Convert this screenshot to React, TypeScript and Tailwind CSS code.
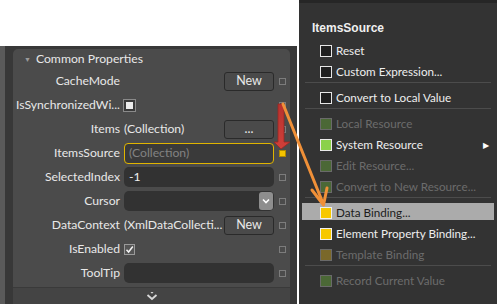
import React from "react";

const FONT = { fontFamily: "Lato, 'Open Sans', sans-serif" };

function Marker({ yellow = false }: { yellow?: boolean }) {
  return yellow ? (
    <div className="w-[7px] h-[7px] bg-[#f5c400] border border-[#b08a00] shrink-0" />
  ) : (
    <div className="w-[7px] h-[7px] border border-[#7c7c7c] shrink-0" />
  );
}

function Row({ label, children, yellow = false }: { label: string; children?: React.ReactNode; yellow?: boolean }) {
  return (
    <div className="h-[24px] flex items-center">
      <div className="w-[107px] shrink-0 text-right text-[12.2px] text-[#e8e8e8] whitespace-nowrap leading-none">{label}</div>
      <div className="w-[150px] ml-[4px] shrink-0 flex items-center h-full">{children}</div>
      <div className="ml-[5px] flex items-center">
        <Marker yellow={yellow} />
      </div>
    </div>
  );
}

function Btn({ text }: { text: string }) {
  return (
    <div className="w-[50px] h-[19px] rounded-[3px] border border-[#2a2a2a] bg-[#4a4a4a] flex items-center justify-center text-[12.5px] text-[#e8e8e8] leading-none">
      {text}
    </div>
  );
}

type IconKind = "empty" | "greenDim" | "green" | "yellow" | "oliveDim";

function MenuIcon({ kind }: { kind: IconKind }) {
  const cls: Record<IconKind, string> = {
    empty: "bg-[#1f1f1f] border-[#e6e6e6]",
    greenDim: "bg-[#4b6836] border-[#6a6a6a]",
    green: "bg-[#8bd14b] border-[#eaeaea]",
    yellow: "bg-[#f7c800] border-[#f0f0f0]",
    oliveDim: "bg-[#7a682a] border-[#6a6a6a]",
  };
  return <div className={`w-[12px] h-[12px] border shrink-0 ${cls[kind]}`} />;
}

function Item({ icon, text, disabled = false, active = false, sub = false }: { icon: IconKind; text: string; disabled?: boolean; active?: boolean; sub?: boolean }) {
  return (
    <div className="h-[21px] relative">
      <div className={`absolute inset-x-[3px] top-[1px] bottom-[3px] ${active ? "bg-[#ababab]" : ""}`} />
      <div className="relative h-full flex items-center pl-[21px] pr-[8px]">
        <MenuIcon kind={icon} />
        <span
          className={`ml-[4px] text-[11.7px] leading-none whitespace-nowrap ${
            active ? "text-[#1c1c1c]" : disabled ? "text-[#6c6c6c]" : "text-[#eeeeee]"
          }`}
        >
          {text}
        </span>
        {sub && <span className="ml-auto text-[8px] text-white leading-none">▶</span>}
      </div>
    </div>
  );
}

function Sep() {
  return (
    <div className="h-[5px]">
      <div className="mx-[6px] h-px bg-[#4c4c4c]" />
    </div>
  );
}

export default function App() {
  return (
    <div className="relative w-[497px] h-[304px] overflow-hidden flex bg-white" style={FONT}>
      {/* Left property panel */}
      <div className="w-[299px] h-full flex flex-col bg-white">
        <div className="h-[46px]" />
        <div className="flex-1 w-[297px] bg-[#383838] border-l-[5px] border-[#5a5a5a] pl-[8px] pr-[7px] pt-[3px] flex flex-col">
          <div className="flex-1 bg-[#4b4b4b] rounded-t-[5px] flex flex-col">
            <div className="h-[20px] flex items-center pl-[11px]">
              <span className="text-[7px] text-[#9a9a9a] mr-[5px] leading-none">▼</span>
              <span className="text-[12.2px] text-[#e8e8e8] leading-none">Common Properties</span>
            </div>
            <Row label="CacheMode">
              <div className="ml-auto"><Btn text="New" /></div>
            </Row>
            <Row label="IsSynchronizedWi...">
              <div className="w-[11px] h-[11px] border-2 border-[#3a3a3a] bg-[#ececec] outline outline-1 outline-[#8a8a8a]" />
            </Row>
            <Row label="Items">
              <span className="text-[12.2px] text-[#e8e8e8] leading-none whitespace-nowrap">(Collection)</span>
              <div className="ml-auto"><Btn text="..." /></div>
            </Row>
            <Row label="ItemsSource" yellow>
              <div className="w-full h-[21px] rounded-[4px] border border-[#e0b400] bg-[#3a3a3a] flex items-center pl-[4px] text-[12.2px] text-[#828282] leading-none">
                (Collection)
              </div>
            </Row>
            <Row label="SelectedIndex">
              <div className="w-full h-[20px] rounded-[5px] bg-[#323232] flex items-center pl-[5px] text-[12.2px] text-[#f0f0f0] leading-none">
                -1
              </div>
            </Row>
            <Row label="Cursor">
              <div className="w-full h-[20px] rounded-[5px] bg-[#323232] flex items-center justify-end pr-[1px]">
                <div className="w-[14px] h-[18px] rounded-[3px] bg-[#8e8e8e] flex items-center justify-center">
                  <svg width="8" height="6" viewBox="0 0 8 6">
                    <path d="M1 1.5 L4 4.5 L7 1.5" stroke="#ffffff" strokeWidth="1.6" fill="none" />
                  </svg>
                </div>
              </div>
            </Row>
            <Row label="DataContext">
              <span className="text-[12.2px] text-[#e8e8e8] leading-none whitespace-nowrap">(XmlDataCollecti...</span>
              <div className="ml-auto"><Btn text="New" /></div>
            </Row>
            <Row label="IsEnabled">
              <div className="w-[11px] h-[11px] border border-[#9a9a9a] bg-[#555555] flex items-center justify-center">
                <svg width="9" height="9" viewBox="0 0 9 9">
                  <path d="M1.5 4.8 L3.6 7 L7.8 1.5" stroke="#f4f4f4" strokeWidth="1.5" fill="none" />
                </svg>
              </div>
            </Row>
            <Row label="ToolTip">
              <div className="w-full h-[20px] rounded-[5px] bg-[#323232]" />
            </Row>
          </div>
          <div className="h-[17px] border-t border-[#3a3a3a] bg-[#444444] flex items-center justify-center">
            <svg width="14" height="10" viewBox="0 0 14 10">
              <path d="M5.5 1 L7 2.8 L8.5 1 Z" fill="#d8d8d8" />
              <path d="M2.5 4 L7 8 L11.5 4" stroke="#d8d8d8" strokeWidth="1.8" fill="none" />
            </svg>
          </div>
        </div>
      </div>

      {/* Context menu */}
      <div className="w-[198px] h-full bg-[#333333] flex flex-col">
        <div className="h-[3px] bg-[#262626]" />
        <div className="h-[15px]" />
        <div className="h-[20px] flex items-center pl-[13px]">
          <span className="text-[12px] font-bold text-[#f0f0f0] leading-none" style={{ fontFamily: "'Liberation Sans', sans-serif" }}>
            ItemsSource
          </span>
        </div>
        <div className="h-[2px]" />
        <Item icon="empty" text="Reset" />
        <Item icon="empty" text="Custom Expression..." />
        <Sep />
        <Item icon="empty" text="Convert to Local Value" />
        <Sep />
        <Item icon="greenDim" text="Local Resource" disabled />
        <Item icon="green" text="System Resource" sub />
        <Item icon="greenDim" text="Edit Resource..." disabled />
        <Item icon="greenDim" text="Convert to New Resource..." disabled />
        <Sep />
        <Item icon="yellow" text="Data Binding..." active />
        <Item icon="yellow" text="Element Property Binding..." />
        <Item icon="oliveDim" text="Template Binding" disabled />
        <Sep />
        <Item icon="greenDim" text="Record Current Value" disabled />
      </div>

      {/* Annotation arrows */}
      <svg className="absolute inset-0 pointer-events-none" width="497" height="304" viewBox="0 0 497 304">
        <defs>
          <linearGradient id="red" x1="0" y1="0" x2="0" y2="1">
            <stop offset="0" stopColor="#b8322e" />
            <stop offset="1" stopColor="#d0403a" />
          </linearGradient>
        </defs>
        <path d="M278 104 H284 V142 H290 L281 149 L274 142 H278 Z" fill="url(#red)" stroke="#9a2622" strokeWidth="0.8" />
        <path d="M283 104 L322.5 202" stroke="#f09038" strokeWidth="3" fill="none" strokeLinecap="round" />
        <path d="M312 190 L323.5 205 L327 188" stroke="#f09038" strokeWidth="3" fill="none" strokeLinecap="round" strokeLinejoin="round" />
      </svg>
    </div>
  );
}
